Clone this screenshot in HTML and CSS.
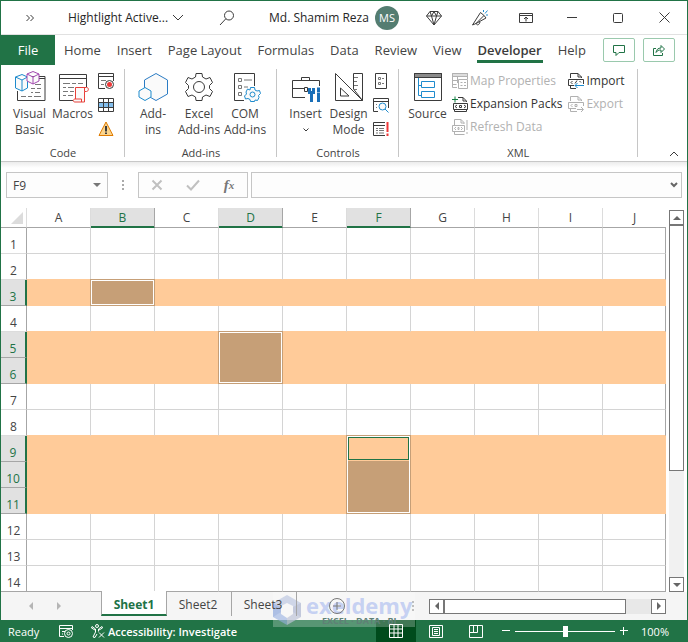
FILE: index.html
```html
<!DOCTYPE html>
<html lang="en">
<head>
    <meta charset="UTF-8">
    <meta name="viewport" content="width=device-width, initial-scale=1.0">
    <title>Hightlight Active - Excel</title>
    <link rel="stylesheet" href="styles.css">
</head>
<body>
<div class="window">
    <header class="title-bar">
        <button class="more" aria-label="More commands"><svg width="8" height="8" viewBox="0 0 8 8"><path d="M.5 1l3 3-3 3M4.500 1l3 3-3 3"/></svg></button>
        <button class="doc-name">Hightlight Active... <svg width="12" height="7" viewBox="0 0 12 7"><path d="M1 1l5 5 5-5"/></svg></button>
        <button class="search" aria-label="Search"><svg width="16" height="16" viewBox="0 0 16 16"><circle cx="10" cy="5.500" r="4.500"/><path d="M6.800 8.800L1 15"/></svg></button>
        <span class="user">Md. Shamim Reza</span>
        <span class="avatar">MS</span>
        <div class="window-buttons">
            <button aria-label="Premium"><svg width="16" height="16" viewBox="0 0 16 16"><path d="M4 1.500h8l3.500 4.500L8 15 .5 6zM.5 6h15M4 1.500L5.500 6 8 15l2.500-9L12 1.500M5.500 6L8 1.500 10.500 6"/></svg></button>
            <button aria-label="Coming soon"><svg width="18" height="18" viewBox="0 0 18 18"><path d="M9.500 3.500l3.500 3L5 14.500 1.500 16zM13 6.500L15 9 5 14.500M5 14.500c1 2 3 2 4-1.500"/><path class="blue" d="M12.500 3V1M14 4.500l2.500-3M15 6h2"/></svg></button>
            <button aria-label="Ribbon display options"><svg width="14" height="12" viewBox="0 0 14 12"><path d="M.5 1.500h13v9H.5zM.5 3.500h13M7 9.500V5M5 7l2-2 2 2"/></svg></button>
            <button aria-label="Minimize"><svg width="10" height="10" viewBox="0 0 10 10"><path d="M0 4.500h10"/></svg></button>
            <button aria-label="Maximize"><svg width="10" height="10" viewBox="0 0 10 10"><rect x=".5" y=".5" width="9" height="9" rx="1"/></svg></button>
            <button aria-label="Close"><svg width="11" height="11" viewBox="0 0 11 11"><path d="M.5.5l10 10M10.500.5l-10 10"/></svg></button>
        </div>
    </header>

    <nav class="tabs">
        <button class="tab file">File</button>
        <button class="tab">Home</button>
        <button class="tab">Insert</button>
        <button class="tab">Page Layout</button>
        <button class="tab">Formulas</button>
        <button class="tab">Data</button>
        <button class="tab">Review</button>
        <button class="tab">View</button>
        <button class="tab active">Developer</button>
        <button class="tab">Help</button>
        <div class="tab-actions">
            <button aria-label="Comments"><svg width="12" height="12" viewBox="0 0 12 12"><path d="M.5 1.500h11v7H6l-3 3v-3H.5z"/></svg></button>
            <button aria-label="Share"><svg width="12" height="12" viewBox="0 0 12 12"><path d="M3 4.500H.5v7h9V9M3 8.500c.5-3 2-4.500 5-4.500V1.500l3.500 3.500L8 8.500V6C6 6 4 6.500 3 8.500z"/></svg></button>
        </div>
    </nav>

    <section class="ribbon">
        <div class="group">
            <div class="tools code">
                <button class="big">
                    <svg width="32" height="32" viewBox="0 0 32 32"><path d="M16 5.500h15v24H3.500V20M25 7.500h6"/><path class="thin" d="M21 13.500h6M17 17.500h4M23 17.500h4M17 21.500h2M21 21.500h5M7 25.500h5M14 25.500h4M20 25.500h7"/><path class="blue fill" d="M1.500 6L8 3.500 13.500 6v11L8 20l-6.500-3zM1.500 6L8 9l5.500-3M8 9v11"/><path class="purple fill" d="M13 3l6-2.500L25 3v7l-6 3-6-3zM13 3l6 3 6-3M19 6v7"/></svg>
                    <span>Visual<br>Basic</span>
                </button>
                <button class="big">
                    <svg width="32" height="32" viewBox="0 0 32 32"><path d="M16 29.500H2.500v-26h27V16M2.500 7.500h27"/><path class="thin" d="M6 12.500h7M15 12.500h4M21 12.500h5M6 16.500h3M11 16.500h6M6 20.500h5M13 20.500h4M6 24.500h3M11 24.500h5"/><path class="red fill" d="M18.500 28V16.500h11c3 0 2 4 0 4h-2V31H18c-2.500 0-2-3 0-3h6.500v3M27.500 20.500v-4"/></svg>
                    <span>Macros</span>
                </button>
                <div class="small-column">
                    <button aria-label="Record macro"><svg width="16" height="16" viewBox="0 0 16 16"><path d="M7 15.500H.5V.5h15V8M.5 3.500h15"/><path class="thin" d="M3 7.500h5M3 11.500h3"/><circle class="fill" cx="11.500" cy="11.500" r="4"/><circle class="dot" cx="11.500" cy="11.500" r="2.500"/></svg></button>
                    <button aria-label="Use relative references"><svg width="16" height="14" viewBox="0 0 16 14"><path class="bluefill" d="M0 4h16v5H0z"/><path d="M.5.5h15v13H.5zM.5 4.500h15M.5 9.500h15M5.500.5v13M10.500.5v13"/></svg></button>
                    <button aria-label="Macro security"><svg width="16" height="16" viewBox="0 0 16 16"><path class="warning" d="M8 1l7 13.500H1z"/><path class="mark" d="M8 5v5.500M8 11.500v1.500"/></svg></button>
                </div>
            </div>
            <h2>Code</h2>
        </div>
        <div class="group">
            <div class="tools addins">
                <button class="big">
                    <svg width="32" height="32" viewBox="0 0 32 32"><path class="navy fill" d="M19 2.500L30.500 9v14L19 29.500 7.500 23V9z"/><path class="blue fill" d="M8 16.500l6 3.500v6l-6 3.500L2 26v-6z"/></svg>
                    <span>Add-<br>ins</span>
                </button>
                <button class="big">
                    <svg width="32" height="32" viewBox="0 0 32 32"><path d="M13 2.500h6l.5 3.500 3.500 2 4-1.500 2.500 5-3 3v3l3 3-2.500 5-4-1.500-3.500 2-.5 3.500h-6l-.5-3.500L9 24l-4 1.500-2.500-5 3-3v-3l-3-3L5 6.500 9 8l3.500-2z"/><circle cx="16" cy="16" r="5.500"/></svg>
                    <span>Excel<br>Add-ins</span>
                </button>
                <button class="big">
                    <svg width="32" height="32" viewBox="0 0 32 32"><path d="M15 29.500H5.500v-27h20V15"/><path class="thin" d="M9.500 7.500h3v3h-3zM9.500 14.500h3v3h-3zM9.500 21.500h3v3h-3zM15 9h8M15 16h4"/><path class="blue fill" d="M21.500 16.500h4l.5 2.500 2 1 2.500-.5 1 3-2 2 .5 2-1.500 3-2.500-.5-.5 1.500h-4l-.5-2-2-1-2.500.5-1-3 2-2-.5-2 1.500-3 2.500 1z"/><circle class="blue" cx="23.500" cy="23.500" r="2.500"/></svg>
                    <span>COM<br>Add-ins</span>
                </button>
            </div>
            <h2>Add-ins</h2>
        </div>
        <div class="group">
            <div class="tools controls">
                <button class="big">
                    <svg width="32" height="32" viewBox="0 0 32 32"><path d="M15 26.500H2.500v-17h27V15M2.500 17.500h12M11.500 9V6.500h8V9M14.500 16.500h3v4h-3z"/><path class="wrench" d="M19.500 17v4.500h4V17M21.500 22v9M28.500 16.500v5M28.500 22v9"/></svg>
                    <span>Insert</span>
                    <svg class="drop" width="6" height="4" viewBox="0 0 6 4"><path d="M.5.5L3 3 5.500.5"/></svg>
                </button>
                <button class="big">
                    <svg width="32" height="32" viewBox="0 0 32 32"><path d="M20.500 18V2.500h9v27zM2.500 2.500v27h27zM7.500 17v8H16z"/><path class="thin" d="M21 6.500h4M21 10.500h3M21 14.500h4M21 18.500h3"/></svg>
                    <span>Design<br>Mode</span>
                </button>
                <div class="small-column">
                    <button aria-label="Properties"><svg width="16" height="16" viewBox="0 0 16 16"><path d="M2.500.5h11v15h-11z"/><path class="thin" d="M5.500 4.500h2v2h-2zM5.500 9.500h2v2h-2zM9 5.500h2M9 10.500h2"/></svg></button>
                    <button aria-label="View code"><svg width="16" height="16" viewBox="0 0 16 16"><path d="M5 14.500H.5V1.500h15V11M.5 4.500h15"/><path class="thin" d="M3 7.500h1M3 10.500h1"/><circle class="blue fill" cx="9.500" cy="9.500" r="3.500"/><path class="blue" d="M12 12l3.500 3.500"/></svg></button>
                    <button aria-label="Run dialog"><svg width="16" height="16" viewBox="0 0 16 16"><path d="M12 14.500H.5V1.500H12M.5 4.500H12"/><path class="thin" d="M3 7.500h2M6 7.500h5M3 9.500h2M6 9.500h5M3 12h2M6 12h5"/><path class="alert" d="M14.500 1v10M14.500 12.500V15"/></svg></button>
                </div>
            </div>
            <h2>Controls</h2>
        </div>
        <div class="group">
            <div class="tools xml">
                <button class="big">
                    <svg width="32" height="32" viewBox="0 0 32 32"><path class="head" d="M2.500 2.500h27v4h-27z"/><path d="M2.500 2.500h27v27h-27z"/><path class="blue" d="M6.500 7v17.500h3M6.500 14.500h3M9.500 10.500h13v6h-13zM9.500 20.500h13v6h-13z"/></svg>
                    <span>Source</span>
                </button>
                <div class="list">
                    <button disabled><svg width="16" height="16" viewBox="0 0 16 16"><path class="head" d="M.5.5h15v3H.5z"/><path d="M5 14.500H.5V.5h15V6M.5 7.500h5M.5 11.500h4M5.500 4v6M6.500 6.500h9v9h-9zM8.500 9.500h2M12 9.500h2M8.500 12.500h2M12 12.500h2"/></svg>Map Properties</button>
                    <button><svg width="16" height="16" viewBox="0 0 16 16"><path d="M6 1.500h5L14.500 5v1M11 1.500V5h3M2.500 13v2.500h12V14M1.500 7.500h14v6H1.500zM5 9l-2 1.500L5 12M12 9l2 1.500-2 1.500M7.500 9.500h2v2h-2z"/><path class="green" d="M3 .5v6M0 3.500h6"/></svg>Expansion Packs</button>
                    <button disabled><svg width="16" height="16" viewBox="0 0 16 16"><path d="M2.500 6V.5H9L12 3.500V5M9 .5V4h3M2.500 13v2.500h10M.5 6.500h12v6H.5zM4 8L2.500 9.500 4 11M9 8l1.500 1.500L9 11M6 8.500h1v2H6zM15 1v10M15 13v2"/></svg>Refresh Data</button>
                </div>
                <div class="list">
                    <button><svg width="16" height="16" viewBox="0 0 16 16"><path d="M2.500 5V.5H10L13.500 4v1M10 .5V4h3.500M2.500 13v2.500H8M6 12.500H.5v-6h15V11M4.500 8L3 9.500 4.500 11M7 10.500l2-3M11.500 8L13 9.500"/><path class="blue" d="M16 12.500H7M9.500 10L7 12.500 9.500 15"/></svg>Import</button>
                    <button disabled><svg width="16" height="16" viewBox="0 0 16 16"><path d="M2.500 5V.5H10L13.500 4v1M10 .5V4h3.500M2.500 13v2.500H9M8 12.500H.5v-6h15V10M4.500 8L3 9.500 4.500 11M7 8.500h2v2H7zM9 13.500h6M13 11l2.500 2.500L13 16"/></svg>Export</button>
                </div>
            </div>
            <h2>XML</h2>
        </div>
        <button class="collapse" aria-label="Collapse the ribbon"><svg width="10" height="6" viewBox="0 0 10 6"><path d="M1 5l4-4 4 4"/></svg></button>
    </section>

    <div class="formula-bar">
        <label class="name-box"><input type="text" value="F9" aria-label="Name box"><svg width="8" height="4" viewBox="0 0 8 4"><path d="M0 0h8L4 4z"/></svg></label>
        <span class="dots"></span>
        <div class="formula-buttons">
            <button aria-label="Cancel"><svg width="12" height="12" viewBox="0 0 12 12"><path d="M1.500 1.500l9 9M10.500 1.500l-9 9"/></svg></button>
            <button aria-label="Enter"><svg width="14" height="12" viewBox="0 0 14 12"><path d="M1 6.500L5 10.500 13 1.500"/></svg></button>
            <button class="fx" aria-label="Insert function">f<sub>x</sub></button>
        </div>
        <label class="formula"><input type="text" aria-label="Formula"><svg width="8" height="6" viewBox="0 0 8 6"><path d="M1 1l3 3 3-3"/></svg></label>
    </div>

    <main class="sheet">
        <table class="grid">
            <thead>
                <tr><th class="corner"><svg width="12" height="12" viewBox="0 0 12 12"><path d="M12 0v12H0z"/></svg></th><th>A</th><th class="picked">B</th><th>C</th><th class="picked">D</th><th>E</th><th class="picked">F</th><th>G</th><th>H</th><th>I</th><th class="last">J</th></tr>
            </thead>
            <tbody>
                <tr><th>1</th><td></td><td></td><td></td><td></td><td></td><td></td><td></td><td></td><td></td><td></td></tr>
                <tr><th>2</th><td></td><td></td><td></td><td></td><td></td><td></td><td></td><td></td><td></td><td></td></tr>
                <tr class="hit"><th>3</th><td></td><td><span class="selection"></span></td><td></td><td></td><td></td><td></td><td></td><td></td><td></td><td></td></tr>
                <tr><th>4</th><td></td><td></td><td></td><td></td><td></td><td></td><td></td><td></td><td></td><td></td></tr>
                <tr class="hit"><th>5</th><td></td><td></td><td></td><td><span class="selection two-rows"></span></td><td></td><td></td><td></td><td></td><td></td><td></td></tr>
                <tr class="hit"><th>6</th><td></td><td></td><td></td><td></td><td></td><td></td><td></td><td></td><td></td><td></td></tr>
                <tr><th>7</th><td></td><td></td><td></td><td></td><td></td><td></td><td></td><td></td><td></td><td></td></tr>
                <tr><th>8</th><td></td><td></td><td></td><td></td><td></td><td></td><td></td><td></td><td></td><td></td></tr>
                <tr class="hit"><th>9</th><td></td><td></td><td></td><td></td><td></td><td><span class="selection three-rows"><span class="active-cell"></span></span></td><td></td><td></td><td></td><td></td></tr>
                <tr class="hit"><th>10</th><td></td><td></td><td></td><td></td><td></td><td></td><td></td><td></td><td></td><td></td></tr>
                <tr class="hit"><th>11</th><td></td><td></td><td></td><td></td><td></td><td></td><td></td><td></td><td></td><td></td></tr>
                <tr><th>12</th><td></td><td></td><td></td><td></td><td></td><td></td><td></td><td></td><td></td><td></td></tr>
                <tr><th>13</th><td></td><td></td><td></td><td></td><td></td><td></td><td></td><td></td><td></td><td></td></tr>
                <tr><th>14</th><td></td><td></td><td></td><td></td><td></td><td></td><td></td><td></td><td></td><td></td></tr>
            </tbody>
        </table>
        <div class="scroll vertical">
            <button aria-label="Scroll up"><svg width="8" height="4" viewBox="0 0 8 4"><path d="M4 0l4 4H0z"/></svg></button>
            <div class="track"><div class="thumb"></div></div>
            <button aria-label="Scroll down"><svg width="8" height="4" viewBox="0 0 8 4"><path d="M0 0h8L4 4z"/></svg></button>
        </div>
    </main>

    <div class="sheet-bar">
        <div class="sheet-nav">
            <button aria-label="Previous sheet"><svg width="4" height="8" viewBox="0 0 4 8"><path d="M4 0v8L0 4z"/></svg></button>
            <button aria-label="Next sheet"><svg width="4" height="8" viewBox="0 0 4 8"><path d="M0 0v8l4-4z"/></svg></button>
        </div>
        <button class="sheet-tab current">Sheet1</button>
        <button class="sheet-tab">Sheet2</button>
        <button class="sheet-tab">Sheet3</button>
        <button class="new-sheet" aria-label="New sheet"><svg width="16" height="16" viewBox="0 0 16 16"><circle cx="8" cy="8" r="7.500"/><path d="M8 4v8M4 8h8"/></svg></button>
        <span class="dots"></span>
        <div class="scroll horizontal">
            <button aria-label="Scroll left"><svg width="4" height="8" viewBox="0 0 4 8"><path d="M4 0v8L0 4z"/></svg></button>
            <div class="track"><div class="thumb"></div></div>
            <button aria-label="Scroll right"><svg width="4" height="8" viewBox="0 0 4 8"><path d="M0 0v8l4-4z"/></svg></button>
        </div>
        <div class="watermark">
            <svg width="28" height="30" viewBox="0 0 28 30"><path class="light" d="M14 0l14 8v14l-8-5v-6l-6-3-6 3v6l-8 5V8z"/><path class="deep" d="M0 8l8 4v7l6 4v7L0 22z"/><path class="mid" d="M28 8v14l-14 8v-7l6-4v-7z"/></svg>
            <p><b>exeldemy</b><small>EXCEL · DATA · BI</small></p>
        </div>
    </div>

    <footer class="status-bar">
        <span class="ready">Ready</span>
        <button class="record" aria-label="Record macro"><svg width="14" height="13" viewBox="0 0 14 13"><path d="M5 11.500H.5V.5h13V5M.5 3.500h13M3 6.500h3M3 9h1"/><circle cx="9.500" cy="8.500" r="4"/><circle cx="9.500" cy="8.500" r="1.500"/></svg></button>
        <button class="access"><svg width="14" height="14" viewBox="0 0 14 14"><circle cx="6" cy="2" r="1.500"/><path d="M1 2.500L4.500 5v3L2 13l2 .5L6 10M11 2.500L7.500 5v2.500M1 2.500L.5 4 4 6M11 2.500l.5 1.500L8 6M8 8.500l5 5M13 8.500l-5 5"/></svg>Accessibility: Investigate</button>
        <div class="views">
            <button class="on" aria-label="Normal view"><svg width="14" height="14" viewBox="0 0 14 14"><path d="M.5.5h13v13H.5zM.5 5h13M.5 9h13M5 .5v13M9 .5v13"/></svg></button>
            <button aria-label="Page layout view"><svg width="14" height="13" viewBox="0 0 14 13"><path d="M.5.5h13v12H.5zM3.500 2.500h7v8h-7zM5 4.500h4M5 6.500h4M5 8.500h4"/></svg></button>
            <button aria-label="Page break view"><svg width="14" height="13" viewBox="0 0 14 13"><path d="M.5.5h13v12H.5zM.5 7.500h8V.5M4.500.5v7"/></svg></button>
        </div>
        <div class="zoom">
            <button aria-label="Zoom out"><svg width="8" height="8" viewBox="0 0 8 8"><path d="M0 3.500h8"/></svg></button>
            <input type="range" min="0" max="100" value="50" aria-label="Zoom">
            <button aria-label="Zoom in"><svg width="8" height="8" viewBox="0 0 8 8"><path d="M0 3.500h8M3.500 0v8"/></svg></button>
            <span>100%</span>
        </div>
    </footer>
</div>
</body>
</html>
```
FILE: styles.css
```css
* {
    margin: 0;
    padding: 0;
    box-sizing: border-box;
}
body {
    font-family: 'Open Sans', 'Noto Sans', sans-serif;
    font-size: 12px;
    color: #444;
    background: #fff;
}
button, input {
    font: inherit;
    color: inherit;
    background: none;
    border: none;
    white-space: nowrap;
}
button, .avatar {
    display: flex;
    align-items: center;
    justify-content: center;
}
svg {
    display: block;
    flex: none;
    fill: none;
    stroke: #3b3b3b;
}
.window {
    min-height: 100vh;
    border: 1px solid #217346;
    border-bottom: none;
}

/* title bar */
.title-bar {
    display: flex;
    align-items: center;
    height: 34px;
    border-bottom: 1px solid #e1e1e1;
    color: #262626;
}
.more {
    width: 58px;
}
.doc-name {
    width: 134px;
    gap: 4px;
}
.search {
    width: 68px;
}
.user {
    width: 106px;
    padding-left: 8px;
    white-space: nowrap;
}
.avatar {
    width: 24px;
    height: 24px;
    margin-left: 8px;
    border-radius: 50%;
    background: #547d71;
    color: #fff;
    font-size: 11px;
}
.window-buttons {
    display: flex;
    margin-left: auto;
}
.window-buttons button {
    width: 46px;
    height: 33px;
}
.blue {
    stroke: #1e8bcd;
}

/* ribbon tabs */
.tabs {
    display: flex;
    gap: 2px;
    height: 30px;
}
.tab {
    position: relative;
    flex: none;
    padding: 0 7px;
    font-size: 13px;
}
.file {
    width: 54px;
    background: #217346;
    color: #fff;
}
.active {
    font-weight: 600;
    color: #3b3b3b;
}
.active::after {
    content: "";
    position: absolute;
    left: 6px;
    right: 6px;
    bottom: 2px;
    height: 3px;
    background: #217346;
}
.tab-actions {
    display: flex;
    gap: 8px;
    margin-left: auto;
    padding: 3px 12px 3px 0;
}
.tab-actions button {
    width: 32px;
    height: 24px;
    border: 1px solid #9ac9ad;
    border-radius: 2px;
}
.tab-actions svg {
    stroke: #217346;
}

/* ribbon */
.ribbon {
    display: flex;
    height: 97px;
    padding-top: 4px;
    border-bottom: 1px solid #c8c8c8;
}
.group {
    position: relative;
    display: flex;
    flex: none;
    flex-direction: column;
    justify-content: space-between;
}
.group::after {
    content: "";
    position: absolute;
    top: 0;
    right: 0;
    bottom: 4px;
    width: 1px;
    background: #c6c6c6;
}
.group h2 {
    font-size: 11px;
    font-weight: 400;
    line-height: 14px;
    padding-bottom: 1px;
    text-align: center;
}
.tools {
    display: flex;
    align-items: flex-start;
    padding: 0 7px;
}
.big {
    flex: none;
    flex-direction: column;
    width: 43px;
    padding-top: 2px;
    line-height: 16px;
}
.big span {
    margin-top: 3px;
}
.big .drop {
    margin-top: 6px;
}
.addins {
    padding: 0 9px 0 5px;
}
.addins .big {
    width: 46px;
}
.small-column button {
    width: 24px;
    height: 24px;
}
.controls .small-column button {
    width: 22px;
}
.xml {
    padding-right: 13px;
}
.list {
    padding-left: 3px;
}
.list + .list {
    padding-left: 6px;
}
.list button {
    height: 23px;
    gap: 2px;
    color: #333;
}
.list button:disabled {
    color: #b1b1b1;
}
.list button:disabled svg {
    stroke: #b1b1b1;
}
.thin {
    stroke: #777;
}
.fill {
    fill: #fafafa;
}
.purple {
    stroke: #a349b0;
}
.red {
    stroke: #e8403a;
}
.navy {
    stroke: #2b7cc4;
}
.green {
    stroke: #107c41;
}
.dot {
    fill: #f03a3a;
    stroke: none;
}
.bluefill {
    fill: #83beec;
    stroke: none;
}
.warning {
    fill: #fbd48c;
    stroke: #e07b00;
}
.mark {
    stroke-width: 2;
}
.wrench {
    stroke: #1a6fb8;
    stroke-width: 3;
}
.alert {
    stroke: #f03a3a;
    stroke-width: 2;
}
.head {
    fill: #8a8a8a;
}
:disabled .head {
    fill: #ddd;
}
.collapse {
    align-self: flex-end;
    width: 26px;
    height: 14px;
    margin-left: auto;
}

/* formula bar */
.formula-bar {
    display: flex;
    height: 46px;
    padding: 10px 5px;
    background: linear-gradient(#ececec, #fff 6px);
}
.name-box, .formula, .formula-buttons {
    display: flex;
    align-items: center;
    border: 1px solid #c6c6c6;
    background: #fdfdfd;
}
.name-box {
    width: 102px;
    padding: 0 6px;
}
.name-box input, .formula input {
    flex: 1;
    min-width: 0;
    outline: none;
}
.name-box svg {
    fill: #777;
    stroke: none;
}
.dots {
    width: 2px;
    height: 10px;
    background: repeating-linear-gradient(#aaa 0 2px, transparent 2px 4px);
}
.formula-bar .dots {
    align-self: center;
    margin: 0 14px;
}
.formula-buttons {
    width: 110px;
    margin-right: 3px;
}
.formula-buttons button {
    flex: 1;
}
.formula-buttons svg {
    stroke: #c0c0c0;
    stroke-width: 2;
}
.fx {
    font-family: 'Liberation Serif', serif;
    font-size: 15px;
    font-style: italic;
    font-weight: 700;
    color: #777;
}
.fx sub {
    font-size: 11px;
}
.formula {
    flex: 1;
    padding: 0 3px;
}
.formula svg {
    stroke: #666;
    stroke-width: 2;
}

/* grid */
.sheet {
    display: flex;
    padding-right: 3px;
}
.grid {
    flex: 1;
    table-layout: fixed;
    border-collapse: separate;
    border-spacing: 0;
}
.grid th {
    font-weight: 400;
}
.grid thead th {
    width: 64px;
    height: 20px;
    border-right: 1px solid #dcdcdc;
    border-bottom: 1px solid #a6a6a6;
    line-height: 16px;
}
.grid thead .picked {
    background: #e1e1e1;
    border-right-color: #a6a6a6;
    border-bottom-color: #217346;
    box-shadow: inset 0 -1px #217346;
    color: #217346;
}
.grid thead .corner {
    width: 26px;
}
.grid thead .last {
    width: auto;
    border-right: none;
}
.corner svg {
    margin-left: 10px;
    fill: #dcdcdc;
    stroke: none;
}
.grid tbody th {
    height: 26px;
    padding-top: 9px;
    border-right: 1px solid #a6a6a6;
    border-bottom: 1px solid #dcdcdc;
    line-height: 16px;
}
.grid td {
    position: relative;
    border-right: 1px solid #d4d4d4;
    border-bottom: 1px solid #d4d4d4;
}
.grid td:last-child {
    border-right-color: #a6a6a6;
}
.grid tbody tr:last-child td, .grid tbody tr:last-child th {
    border-bottom-color: #a6a6a6;
}
.grid .hit th {
    background: #e1e1e1;
    border-right: 2px solid #217346;
    border-bottom-color: #a6a6a6;
    color: #217346;
}
.grid .hit td {
    background: #ffcb99;
    border-color: #ffcb99;
}
/* the row above a highlighted one gives it its top line */
.grid tr:has(+ .hit) td {
    border-bottom-color: #ffcb99;
}
.selection {
    position: absolute;
    top: -1px;
    left: -1px;
    right: -1px;
    z-index: 1;
    height: 27px;
    border: 1px solid #c69f77;
    background: #c69f77;
    box-shadow: inset 0 0 0 1px #fff;
}
.two-rows {
    height: 53px;
}
.three-rows {
    height: 79px;
}
.active-cell {
    position: absolute;
    top: 1px;
    left: 1px;
    right: 1px;
    height: 23px;
    background: #ffcb99;
    border: 1px solid #217346;
    box-shadow: 0 1px #ffcb99;
}

/* scroll bars */
.scroll {
    display: flex;
}
.scroll button {
    width: 15px;
    height: 15px;
    border: 1px solid #777;
    background: #fff;
}
.scroll svg, .sheet-nav svg {
    fill: #666;
    stroke: none;
}
.track {
    flex: 1;
    background: #f1f1f1;
}
.thumb {
    border: 1px solid #777;
    background: #fff;
}
.vertical {
    flex-direction: column;
    margin-left: 3px;
    padding-top: 2px;
}
.vertical .thumb {
    height: 70%;
}
.horizontal {
    flex: 1;
    margin: 0 21px 0 15px;
}
.horizontal .track {
    background: #e8e8e8;
}
.horizontal .thumb {
    width: 88%;
    height: 100%;
}

/* sheet tabs */
.sheet-bar {
    position: relative;
    display: flex;
    align-items: center;
    height: 28px;
    background: #f5f5f5;
}
.sheet-nav {
    display: flex;
    justify-content: center;
    gap: 24px;
    width: 100px;
    padding-right: 12px;
}
.sheet-nav svg {
    fill: #b5b5b5;
}
.sheet-tab {
    align-self: flex-start;
    width: 65px;
    height: 24px;
    padding-right: 2px;
    border-right: 1px solid #a6a6a6;
}
.current {
    width: 66px;
    height: 25px;
    margin-top: -1px;
    padding: 3px 0 0;
    border-left: 1px solid #a6a6a6;
    border-bottom: 2px solid #217346;
    background: #fff;
    color: #217346;
    font-weight: 700;
}
.new-sheet {
    width: 80px;
    margin-right: 2px;
}
.new-sheet svg {
    stroke: #777;
}
.sheet-bar .dots {
    margin-left: 33px;
}
.sheet-tab, .new-sheet {
    position: relative;
    z-index: 1;
}
.watermark {
    position: absolute;
    top: 0;
    left: 272px;
    display: flex;
    gap: 5px;
    width: 142px;
    height: 35px;
    padding-top: 3px;
    background: rgba(255, 255, 255, 0.25);
    pointer-events: none;
}
.watermark p {
    text-align: center;
}
.watermark b {
    display: block;
    font-size: 22px;
    line-height: 20px;
    color: rgba(176, 192, 240, 0.7);
}
.watermark small {
    display: block;
    font-size: 9px;
    font-weight: 700;
    line-height: 12px;
    color: #5f8076;
}
.watermark svg {
    stroke: none;
}
.light {
    fill: rgba(190, 200, 225, 0.7);
}
.deep {
    fill: rgba(150, 175, 225, 0.6);
}
.mid {
    fill: rgba(190, 195, 215, 0.7);
}

/* status bar */
.status-bar {
    display: flex;
    align-items: center;
    height: 22px;
    padding-left: 7px;
    background: #217346;
    color: #fff;
    font-size: 11px;
}
.status-bar svg {
    stroke: #fff;
}
.ready {
    width: 51px;
}
.access {
    gap: 3px;
    margin-left: 18px;
    font-weight: 600;
}
.views {
    display: flex;
    height: 100%;
    margin-left: auto;
}
.views button {
    width: 40px;
}
.views .on {
    background: #004b1c;
}
.zoom {
    display: flex;
    align-items: center;
    gap: 5px;
    padding: 0 18px 0 6px;
}
.zoom input {
    appearance: none;
    width: 100px;
    height: 11px;
    background: linear-gradient(#fff, #fff) center / 100% 1px no-repeat;
}
.zoom input::-webkit-slider-thumb {
    appearance: none;
    width: 5px;
    height: 11px;
    background: #fff;
}
.zoom span {
    margin-left: 8px;
}
```
